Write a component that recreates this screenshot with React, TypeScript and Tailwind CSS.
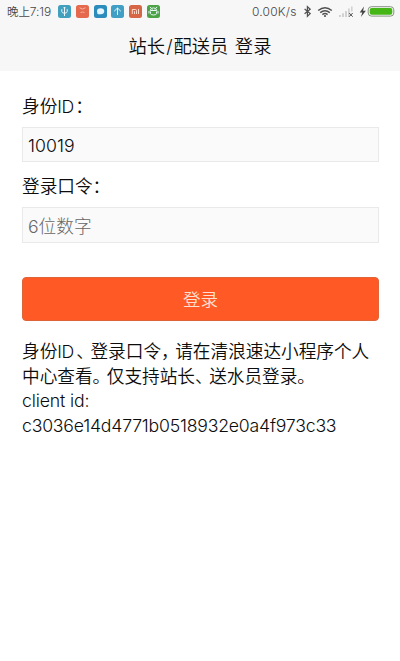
import type { ReactNode } from "react";

const cjk = "font-['Inter','Noto_Sans_CJK_SC',sans-serif]";

function Mark({ children }: { children: ReactNode }) {
  return <span className="inline-block w-[14.2px] [font-feature-settings:'halt']">{children}</span>;
}

function Tile({ color, children }: { color: string; children: ReactNode }) {
  return (
    <span className={`flex size-[13px] items-center justify-center rounded-[2.5px] ${color}`}>
      <svg viewBox="0 0 13 13" className="size-[13px]" fill="none" stroke="#e9f5f8" strokeWidth="1">
        {children}
      </svg>
    </span>
  );
}

function StatusBar() {
  return (
    <div className="flex h-[23px] items-center pl-[7px] pr-[5px] font-[350] text-[#484848]">
      <span className="w-[51px] whitespace-nowrap pt-px text-[11.5px] leading-none tracking-[-0.1px]">
        晚上<span className="text-[12px]">7:19</span>
      </span>
      <div className="flex gap-[4.8px]">
        <Tile color="bg-[#429fbe]">
          <path d="M6.5 2v9M3.8 4.2v2.3q0 1.5 2.7 1.8q2.7-.3 2.7-1.8V4.2M5.5 3.2l1-1.2 1 1.2" />
        </Tile>
        <Tile color="bg-[#e5694c]">
          <path d="M3.5 2.8q3 2.5 6 0M4.5 7.5q2-1 4 0" stroke="#f7b39c" />
        </Tile>
        <Tile color="bg-[#2c8dbd]">
          <ellipse cx="6.6" cy="6.3" rx="3.6" ry="3" fill="#e4f5ff" stroke="none" />
          <path d="M3.4 8.3l2 .8" />
        </Tile>
        <Tile color="bg-[#419fc6]">
          <path d="M6.5 10V3M3.2 6.2L6.5 3l3.3 3.2" />
        </Tile>
        <Tile color="bg-[#d76646]">
          <path d="M3.3 9V4.5h3.2q1 0 1 1V9M5.5 6.3V9M9.5 4v5" stroke="#ffd8c8" />
        </Tile>
        <Tile color="bg-[#4ba345]">
          <path d="M3.3 5.5a3.2 2.6 0 0 1 6.4 0zM3.5 6.5v2q0 1.5 3 1.5t3-1.5v-2M4 3L3 1.8M9 3l1-1.2M2 6v2.5M11 6v2.5M5 4.5h.5M7.7 4.5h.5" />
        </Tile>
      </div>
      <span className="ml-auto w-[49px] whitespace-nowrap text-[12px] leading-none tracking-[0.2px]">0.00K/s</span>
      <svg className="h-[13px] w-[94px]" viewBox="0 0 94 13" fill="none">
        <path d="M3.6 4l5.6 4.6L6.4 11.3V1.7l2.8 2.5L3.6 8.8" stroke="#505050" strokeWidth="1.2" />
        <g stroke="#505050" strokeWidth="1.5">
          <path d="M17.2 5.5q6.8-5.6 13.6 0" />
          <path d="M19.2 7.6q4.8-3.8 9.6 0" />
          <path d="M21.4 9.6q2.6-2 5.2 0" />
        </g>
        <circle cx="24" cy="11" r="1.1" fill="#505050" />
        <g fill="#d2d2d2">
          <path d="M38 10h2v2h-2zM41 8.3h2V12h-2zM44 6h2v6h-2zM47 3.6h1.8V12H47zM50 1.5h1.6v5H50z" />
        </g>
        <path d="M48.2 8l3.5 3.7M51.7 8l-3.5 3.7" stroke="#505050" strokeWidth="1" />
        <path d="M63 1.5l-4.3 6h2.6l-1.4 4.5 5-6.2h-2.8z" fill="#454545" />
        <rect x="67.2" y="1.7" width="25.6" height="9.4" rx="3.2" stroke="#85947f" />
        <rect x="68.7" y="3" width="22.6" height="6.8" rx="2" fill="#46b617" />
      </svg>
    </div>
  );
}

export default function App() {
  return (
    <div className={`h-[661px] w-[400px] overflow-hidden bg-white text-[17.65px] font-[350] text-[#0c0c0c] ${cjk}`}>
      <header className="h-[71px] bg-[#f7f7f7]">
        <StatusBar />
        <h1 className="flex h-[46px] items-center justify-center whitespace-pre text-[18.3px] leading-none font-[350]">
          <span>站长<span className="mx-[1px]">/</span>配送员<span className="inline-block w-[6.5px]"> </span>登录</span>
        </h1>
      </header>
      <main className="px-[22px] pt-[24px]">
        <label className="block h-[32px] whitespace-nowrap leading-[23px]">
          身份<span className="inline-block w-[18px] font-[350] tracking-[-0.3px]">ID</span>：
        </label>
        <div className="flex h-[35px] w-[357px] items-center border border-[#e9e9e9] bg-[#fafafa] pl-[5px] pt-[3px] font-light tracking-[0.1px]">
          10019
        </div>
        <label className="mt-[13px] block h-[32px] whitespace-nowrap leading-[23px]">
          登录口令：
        </label>
        <div className="flex h-[36px] w-[357px] items-center border border-[#e9e9e9] bg-[#fafafa] pl-[5px] pt-[4px] font-light text-[#666]">
          6位数字
        </div>
        <button className="mt-[34px] flex h-[44px] w-[357px] items-center justify-center rounded-[4px] border border-[#df6339] bg-[#ff5a25] pt-[2px] text-[17.5px] font-[350] text-[#ffe0d2]">
          登录
        </button>
        <div className="mt-[19px] whitespace-nowrap leading-[24.5px]">
          <p>
            身份<span className="inline-block w-[19px] tracking-[-0.3px]">ID</span><Mark>、</Mark>登录口令<Mark>，</Mark>请在清浪速达小程序个人
          </p>
          <p>
            中心查看<Mark>。</Mark>仅支持站长<Mark>、</Mark>送水员登录<Mark>。</Mark>
          </p>
          <p className="font-light tracking-[-0.12px]">client id:</p>
          <p className="font-light tracking-[-0.2px]">c3036e14d4771b0518932e0a4f973c33</p>
        </div>
      </main>
    </div>
  );
}
